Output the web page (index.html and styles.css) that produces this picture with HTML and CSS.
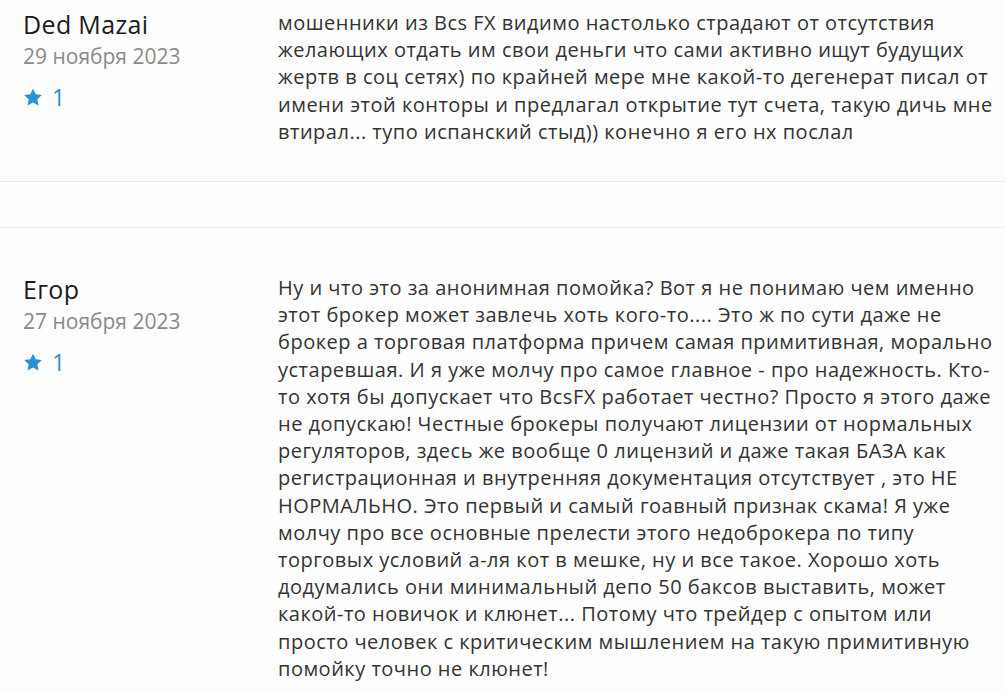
FILE: index.html
```html
<!DOCTYPE html>
<html lang="ru">
<head>
<meta charset="utf-8">
<link rel="stylesheet" href="styles.css">
</head>
<body>
<div class="reviews">
  <div class="review review-first">
    <div class="author">
      <div class="name">Ded Mazai</div>
      <div class="date">29 ноября 2023</div>
      <div class="rating">
        <svg class="star" viewBox="0 0 24 22"><path d="M12 .8l3.3 6.9 7.5 1-5.5 5.2 1.4 7.5L12 17.8l-6.7 3.6 1.4-7.5L1.2 8.7l7.5-1z"/></svg>
        <span class="score">1</span>
      </div>
    </div>
    <div class="text">мошенники из Bcs FX видимо настолько страдают от отсутствия<br>желающих отдать им свои деньги что сами активно ищут будущих<br>жертв в соц сетях) по крайней мере мне какой-то дегенерат писал от<br>имени этой конторы и предлагал открытие тут счета, такую дичь мне<br>втирал... тупо испанский стыд)) конечно я его нх послал</div>
  </div>
  <div class="spacer"></div>
  <div class="review review-next">
    <div class="author">
      <div class="name">Егор</div>
      <div class="date">27 ноября 2023</div>
      <div class="rating">
        <svg class="star" viewBox="0 0 24 22"><path d="M12 .8l3.3 6.9 7.5 1-5.5 5.2 1.4 7.5L12 17.8l-6.7 3.6 1.4-7.5L1.2 8.7l7.5-1z"/></svg>
        <span class="score">1</span>
      </div>
    </div>
    <div class="text">Ну и что это за анонимная помойка? Вот я не понимаю чем именно<br>этот брокер может завлечь хоть кого-то.... Это ж по сути даже не<br>брокер а торговая платформа причем самая примитивная, морально<br>устаревшая. И я уже молчу про самое главное - про надежность. Кто-<br>то хотя бы допускает что BcsFX работает честно? Просто я этого даже<br>не допускаю! Честные брокеры получают лицензии от нормальных<br>регуляторов, здесь же вообще 0 лицензий и даже такая БАЗА как<br>регистрационная и внутренняя документация отсутствует , это НЕ<br>НОРМАЛЬНО. Это первый и самый гоавный признак скама! Я уже<br>молчу про все основные прелести этого недоброкера по типу<br>торговых условий а-ля кот в мешке, ну и все такое. Хорошо хоть<br>додумались они минимальный депо 50 баксов выставить, может<br>какой-то новичок и клюнет... Потому что трейдер с опытом или<br>просто человек с критическим мышлением на такую примитивную<br>помойку точно не клюнет!</div>
  </div>
</div>
</body>
</html>
```
FILE: styles.css
```css
* { box-sizing: border-box; }
html, body { margin: 0; padding: 0; background: #fefefe; }
body { font-family: "Open Sans", "Noto Sans", sans-serif; }
.reviews { display: flex; flex-direction: column; }
.review {
  display: flex;
  padding-left: 23px;
  border-top: 1px solid #ebebeb;
  border-bottom: 1px solid #ebebeb;
}
.review-first { border-top: none; padding-top: 7px; padding-bottom: 36px; }
.review-next { padding-top: 44px; padding-bottom: 42px; }
.spacer { height: 45px; }
.author { width: 255px; flex-shrink: 0; padding-top: 1px; }
.name { font-size: 25px; line-height: 32px; letter-spacing: 0.35px; color: #1b1b1b; }
.date { font-size: 21px; line-height: 28px; color: #8a8a8a; margin-top: 2px; }
.rating { display: flex; align-items: center; gap: 9px; margin-top: 14px; }
.star { width: 20px; height: 18px; fill: #2d8fd6; }
.score { font-size: 23px; line-height: 26px; color: #2b8dd6; }
.text { flex: 1; padding-top: 2px; font-size: 20px; line-height: 27.2px; letter-spacing: 0.5px; white-space: nowrap; color: #333; }
```
